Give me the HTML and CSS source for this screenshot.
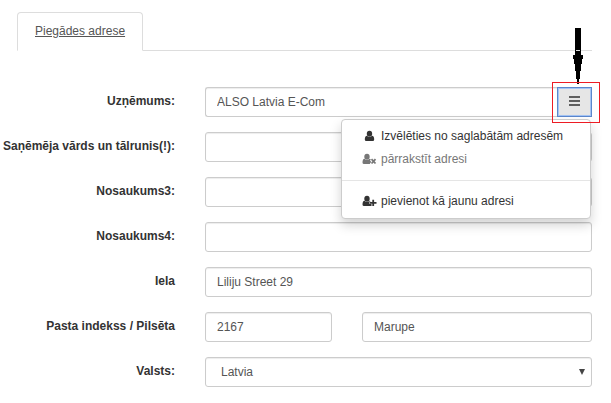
FILE: index.html
```html
<!DOCTYPE html>
<html lang="lv">
<head>
<meta charset="utf-8">
<title>Piegādes adrese</title>
<link rel="stylesheet" href="styles.css">
</head>
<body>
<nav class="tabs"><a class="tab" href="#address">Piegādes adrese</a></nav>
<form class="form" id="address">
  <div class="row">
    <label class="label" for="company">Uzņēmums:</label>
    <div class="group">
      <input class="control" id="company" type="text" value="ALSO Latvia E-Com">
      <div class="toggle-wrap">
        <button class="toggle" type="button" aria-label="Adreses" aria-expanded="true">
          <svg width="11" height="10" viewBox="0 0 11 10"><path d="M0 1h11M0 5h11M0 9h11" stroke="#333" stroke-width="1.700"/></svg>
        </button>
        <span class="highlight"></span>
        <svg class="arrow" width="12" height="56" viewBox="0 0 12 56"><path d="M3 0H9V27H11V31H10V36H9V43H8V51H7V56H5V51H4V43H3V36H2V31H1V27H3z"/><path d="M4 22.500h4" stroke="#ddd"/></svg>
      </div>
      <div class="menu">
        <button class="item" type="button">
          <svg class="icon" viewBox="0 0 15 13"><ellipse cx="7.500" cy="3.700" rx="2.700" ry="3"/><path d="M2.800 9.500Q2.800 6 5 5.800Q7.500 8.200 10 5.800Q12.200 6 12.200 9.500Q12.200 11 10.800 11H4.200Q2.800 11 2.800 9.500z"/></svg>
          Izvēlēties no saglabātām adresēm
        </button>
        <button class="item" type="button" disabled>
          <svg class="icon" viewBox="0 0 15 13"><ellipse cx="5" cy="3.700" rx="2.700" ry="3"/><path d="M.5 9.500Q.5 6 2.500 5.800Q5 8.200 7.500 5.800L9 6.500 8 7.500 9.300 9 7.800 10.500 8.300 11H2Q.5 11 .5 9.500z"/><path d="M9.500 6.200l4 4.300M13.500 6.200l-4 4.300" stroke="currentColor" stroke-width="1.800"/></svg>
          pārrakstīt adresi
        </button>
        <hr class="divider">
        <button class="item" type="button">
          <svg class="icon" viewBox="0 0 15 13"><ellipse cx="5" cy="3.700" rx="2.700" ry="3"/><path d="M.5 9.500Q.5 6 2.500 5.800Q5 8.200 7.500 5.800L9.200 6.200H7.500V9H9.500V11H2Q.5 11 .5 9.500z"/><path d="M8 7.800h6.500M11.200 4.800v6.200" stroke="currentColor" stroke-width="1.800"/></svg>
          pievienot kā jaunu adresi
        </button>
      </div>
    </div>
  </div>
  <div class="row">
    <label class="label" for="recipient">Saņēmēja vārds un tālrunis(!):</label>
    <input class="control" id="recipient" type="text">
  </div>
  <div class="row">
    <label class="label" for="name3">Nosaukums3:</label>
    <input class="control" id="name3" type="text">
  </div>
  <div class="row">
    <label class="label" for="name4">Nosaukums4:</label>
    <input class="control" id="name4" type="text">
  </div>
  <div class="row">
    <label class="label" for="street">Iela</label>
    <input class="control" id="street" type="text" value="Liliju Street 29">
  </div>
  <div class="row">
    <label class="label" for="postcode">Pasta indekss / Pilsēta</label>
    <div class="pair">
      <input class="control" id="postcode" type="text" value="2167">
      <input class="control" type="text" value="Marupe" aria-label="Pilsēta">
    </div>
  </div>
  <div class="row">
    <label class="label" for="country">Valsts:</label>
    <div class="select-wrap">
      <select class="control select" id="country"><option>Latvia</option></select>
      <svg class="caret" width="6" height="6" viewBox="0 0 6 6"><path d="M0 0h6L3 6z"/></svg>
    </div>
  </div>
</form>
</body>
</html>
```
FILE: styles.css
```css
* {
  box-sizing: border-box;
}

body {
  margin: 0;
  padding: 12px 19px 0 0;
  background: #fff;
  color: #333;
  font: 12px/17px "Liberation Sans", Arial, sans-serif;
}

.tabs {
  display: flex;
  margin-left: 17px;
  border-bottom: 1px solid #ddd;
}

.tab {
  margin-bottom: -1px;
  padding: 10px 17px;
  border: 1px solid #ddd;
  border-bottom-color: #fff;
  border-radius: 4px 4px 0 0;
  background: #fff;
  color: #555;
}

.form {
  display: grid;
  gap: 15px;
  margin-top: 36px;
}

.row {
  display: grid;
  grid-template-columns: 175px minmax(0, 1fr);
  column-gap: 30px;
}

.label {
  padding-top: 6px;
  font-weight: bold;
  text-align: right;
  white-space: nowrap;
}

.control {
  width: 100%;
  min-width: 0;
  height: 30px;
  padding: 0 11px;
  border: 1px solid #ccc;
  border-radius: 3px;
  background: #fff;
  box-shadow: inset 0 1px 1px rgba(0, 0, 0, 0.075);
  color: #555;
  font: inherit;
}

.group {
  position: relative;
  display: flex;
}

.group > .control {
  flex: 1;
  border-right: 0;
  border-radius: 3px 0 0 3px;
}

.toggle-wrap {
  position: relative;
  display: flex;
}

.toggle {
  display: flex;
  align-items: center;
  justify-content: center;
  width: 35px;
  height: 30px;
  padding: 0 0 2px;
  border: 1px solid #5b87cc;
  outline: 1px solid #a4c4f5;
  outline-offset: -2px;
  background: #e6e6e6;
}

.highlight {
  position: absolute;
  z-index: 2;
  inset: -5px -8px -6px -5px;
  border: 1px solid #ed1c24;
  pointer-events: none;
}

.arrow {
  position: absolute;
  top: -59px;
  left: 15px;
  pointer-events: none;
}

.menu {
  position: absolute;
  z-index: 1;
  top: 32px;
  right: 1px;
  width: 250px;
  padding: 5px 0;
  border: 1px solid #ccc;
  border-radius: 4px;
  background: #fff;
  box-shadow: 0 6px 12px rgba(0, 0, 0, 0.175);
}

.item {
  display: flex;
  align-items: center;
  gap: 4px;
  width: 100%;
  padding: 3px 20px;
  border: 0;
  background: none;
  color: #333;
  font: inherit;
  white-space: nowrap;
}

.item:disabled {
  color: #777;
}

.icon {
  flex: none;
  width: 15px;
  height: 13px;
  fill: currentColor;
}

.divider {
  height: 1px;
  margin: 9px 0;
  border: 0;
  background: #e5e5e5;
}

.pair {
  display: grid;
  grid-template-columns: 127fr 230fr;
  gap: 30px;
}

.select-wrap {
  position: relative;
}

.select {
  padding: 0 15px;
  appearance: none;
}

.caret {
  position: absolute;
  top: 12px;
  right: 7px;
  fill: #444;
  pointer-events: none;
}
```
